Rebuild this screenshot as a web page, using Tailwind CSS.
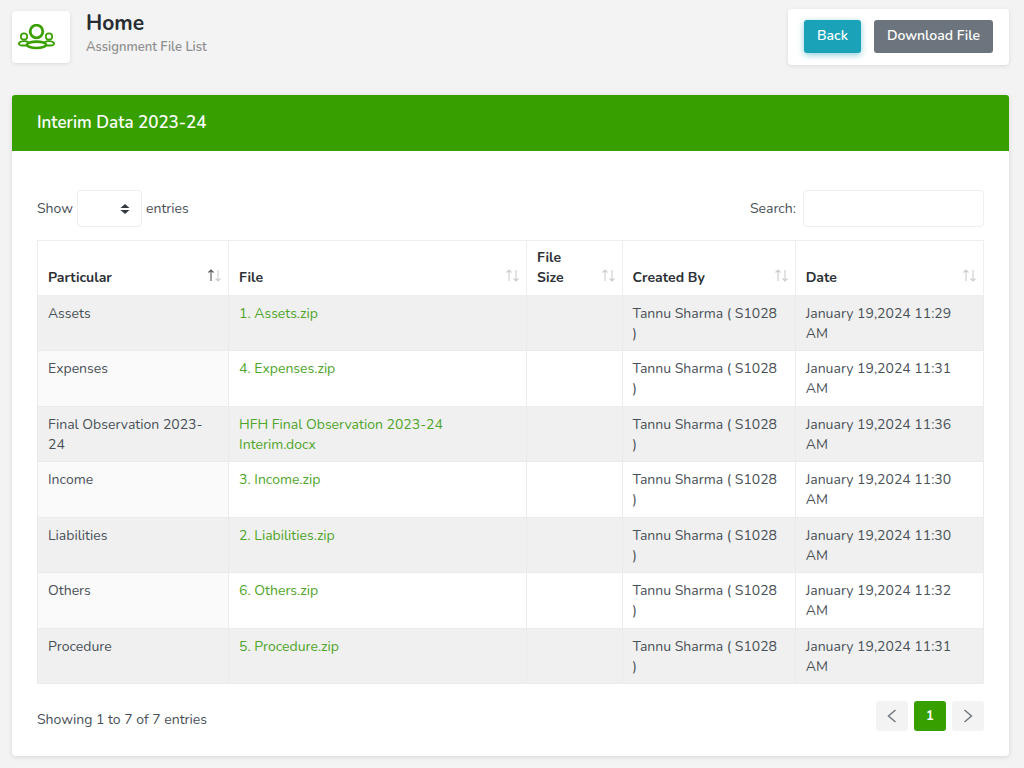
<!DOCTYPE html>
<html lang="en">
<head>
<meta charset="utf-8">
<title>Assignment File List</title>
<script src="https://cdn.jsdelivr.net/npm/@tailwindcss/browser@4"></script>
</head>
<body class="min-h-screen bg-[#f3f3f3] px-3 pt-[9px] pb-3 font-['Nunito','Open_Sans',sans-serif] text-[14px] leading-5 text-[#495057]">
<svg class="hidden">
  <symbol id="sort" viewBox="0 0 14 14" fill="none" stroke-width="1.1">
    <path d="M4 13V2M1.500 4.500L4 2l2.500 2.500"/>
    <path d="M11 2v11M8.500 10.500L11 13l2.500-2.500"/>
  </symbol>
</svg>
<header class="mb-[30px] flex items-start justify-between pr-[3px]">
  <div class="flex">
    <div class="mt-[2px] flex h-[52px] w-[58px] items-center rounded bg-white pl-[6px] shadow-[0_1px_4px_rgba(0,0,0,0.1)]">
      <svg class="h-[26px] w-[37px]" viewBox="0 0 37 26" fill="none" stroke="#3aa000">
        <circle cx="18.500" cy="7.500" r="6.300" stroke-width="2.800"/>
        <circle cx="6" cy="12.500" r="3.200" stroke-width="1.700"/>
        <circle cx="31" cy="12.500" r="3.200" stroke-width="1.700"/>
        <ellipse cx="18.500" cy="20.800" rx="9.500" ry="3.200" stroke-width="2.600"/>
        <path d="M8.500 21.500H4C1 21.500.5 19.500 1.500 18.500C3.500 16.800 8 16.700 10.500 18.200M28.500 21.500H33C36 21.500 36.500 19.500 35.500 18.500C33.500 16.800 29 16.700 26.500 18.200" stroke-width="1.900"/>
      </svg>
    </div>
    <div class="ml-4">
      <h1 class="text-[21px] leading-7 font-bold text-[#272c31]">Home</h1>
      <p class="text-[13px] font-semibold text-[#909090]">Assignment File List</p>
    </div>
  </div>
  <div class="flex gap-[13px] rounded bg-white px-4 pt-[11px] pb-3 shadow-[0_1px_4px_rgba(0,0,0,0.1)]">
    <button type="button" class="h-[33px] rounded-[3px] bg-[#19a2b8] px-[13px] pb-[2px] font-semibold text-white shadow-[0_2px_6px_rgba(25,162,184,0.5)]">Back</button>
    <button type="button" class="h-[33px] rounded-[3px] bg-[#6c757d] px-[13px] pb-[2px] font-semibold text-white">Download File</button>
  </div>
</header>
<main class="mr-[3px] rounded bg-white shadow-[0_1px_5px_rgba(0,0,0,0.12)]">
  <h2 class="flex h-14 items-center rounded-t-[3px] bg-[#389f00] px-[25px] text-[17px] font-semibold text-white">Interim Data 2023-24</h2>
  <div class="px-[25px] pt-[39px] pb-[25px]">
    <div class="mb-[13px] flex items-center justify-between">
      <label class="flex items-center gap-1">Show
        <span class="relative">
          <select aria-label="Entries per page" class="block h-[37px] w-[65px] appearance-none rounded border border-[#eeeeee] bg-white"><option></option></select>
          <svg class="pointer-events-none absolute top-[14px] right-[12px] h-[10px] w-[10px]" viewBox="0 0 10 10" fill="#343a40"><path d="M.5 4L5 0l4.500 4zM.5 6L5 10l4.500-4z"/></svg>
        </span>
        entries
      </label>
      <label class="flex items-center gap-[7px]">Search:
        <input type="search" class="h-[37px] w-[181px] rounded border border-[#eeeeee] bg-white px-3">
      </label>
    </div>
    <table class="h-[444px] w-full table-fixed border-collapse text-left [&_td]:border [&_td]:border-[#ebebeb] [&_td]:px-[10px] [&_td]:pt-[8px] [&_td]:pb-[6px] [&_td]:align-top [&_th]:border [&_th]:border-[#eeeeee] [&_th]:py-[7px] [&_th]:pr-[7px] [&_th]:pl-[10px] [&_th]:align-bottom [&_th]:font-bold [&_th]:text-[#2b3035] [&_th>div]:flex [&_th>div]:items-end [&_th>div]:justify-between [&_th_svg]:mb-[6px] [&_th_svg]:h-[14px] [&_th_svg]:w-[14px] [&_th_svg]:shrink-0 [&_th_svg]:stroke-[#cccccc] [&_a]:text-[#4fa52a]">
      <colgroup><col class="w-[20.2%]"><col class="w-[31.5%]"><col class="w-[10.1%]"><col class="w-[18.3%]"><col class="w-[19.9%]"></colgroup>
      <thead>
        <tr>
          <th scope="col"><div>Particular <svg viewBox="0 0 14 14" fill="none" stroke-width="1.1"><path class="stroke-[#555555]" d="M4 13V2M1.500 4.500L4 2l2.500 2.500"/><path d="M11 2v11M8.500 10.500L11 13l2.500-2.500"/></svg></div></th>
          <th scope="col"><div>File <svg><use href="#sort"/></svg></div></th>
          <th scope="col"><div><span>File<br>Size</span> <svg><use href="#sort"/></svg></div></th>
          <th scope="col"><div>Created By <svg><use href="#sort"/></svg></div></th>
          <th scope="col"><div>Date <svg><use href="#sort"/></svg></div></th>
        </tr>
      </thead>
      <tbody class="[&>tr:nth-child(odd)]:bg-[#f0f0f0] [&>tr:nth-child(even)>td:first-child]:bg-[#fafafa]">
        <tr><td>Assets</td><td><a href="#">1. Assets.zip</a></td><td></td><td>Tannu Sharma ( S1028<br>)</td><td>January 19,2024 11:29<br>AM</td></tr>
        <tr><td>Expenses</td><td><a href="#">4. Expenses.zip</a></td><td></td><td>Tannu Sharma ( S1028<br>)</td><td>January 19,2024 11:31<br>AM</td></tr>
        <tr><td>Final Observation 2023-<br>24</td><td><a href="#">HFH Final Observation 2023-24<br>Interim.docx</a></td><td></td><td>Tannu Sharma ( S1028<br>)</td><td>January 19,2024 11:36<br>AM</td></tr>
        <tr><td>Income</td><td><a href="#">3. Income.zip</a></td><td></td><td>Tannu Sharma ( S1028<br>)</td><td>January 19,2024 11:30<br>AM</td></tr>
        <tr><td>Liabilities</td><td><a href="#">2. Liabilities.zip</a></td><td></td><td>Tannu Sharma ( S1028<br>)</td><td>January 19,2024 11:30<br>AM</td></tr>
        <tr><td>Others</td><td><a href="#">6. Others.zip</a></td><td></td><td>Tannu Sharma ( S1028<br>)</td><td>January 19,2024 11:32<br>AM</td></tr>
        <tr><td>Procedure</td><td><a href="#">5. Procedure.zip</a></td><td></td><td>Tannu Sharma ( S1028<br>)</td><td>January 19,2024 11:31<br>AM</td></tr>
      </tbody>
    </table>
    <div class="flex items-start justify-between">
      <p class="pt-[26px]">Showing 1 to 7 of 7 entries</p>
      <nav aria-label="Pagination" class="flex gap-[6px] pt-[17px] [&>button]:flex [&>button]:h-[30px] [&>button]:w-[32px] [&>button]:items-center [&>button]:justify-center [&>button]:rounded-[3px]">
        <button type="button" aria-label="Previous" class="bg-[#f3f3f3]"><svg class="h-[14px] w-[10px]" viewBox="0 0 10 14" fill="none" stroke="#6c757d" stroke-width="1.400"><path d="M8.500 1L1.500 7l7 6"/></svg></button>
        <button type="button" class="bg-[#389f00] text-[13px] font-bold text-white">1</button>
        <button type="button" aria-label="Next" class="bg-[#f3f3f3]"><svg class="h-[14px] w-[10px]" viewBox="0 0 10 14" fill="none" stroke="#6c757d" stroke-width="1.400"><path d="M1.500 1l7 6-7 6"/></svg></button>
      </nav>
    </div>
  </div>
</main>
</body>
</html>
